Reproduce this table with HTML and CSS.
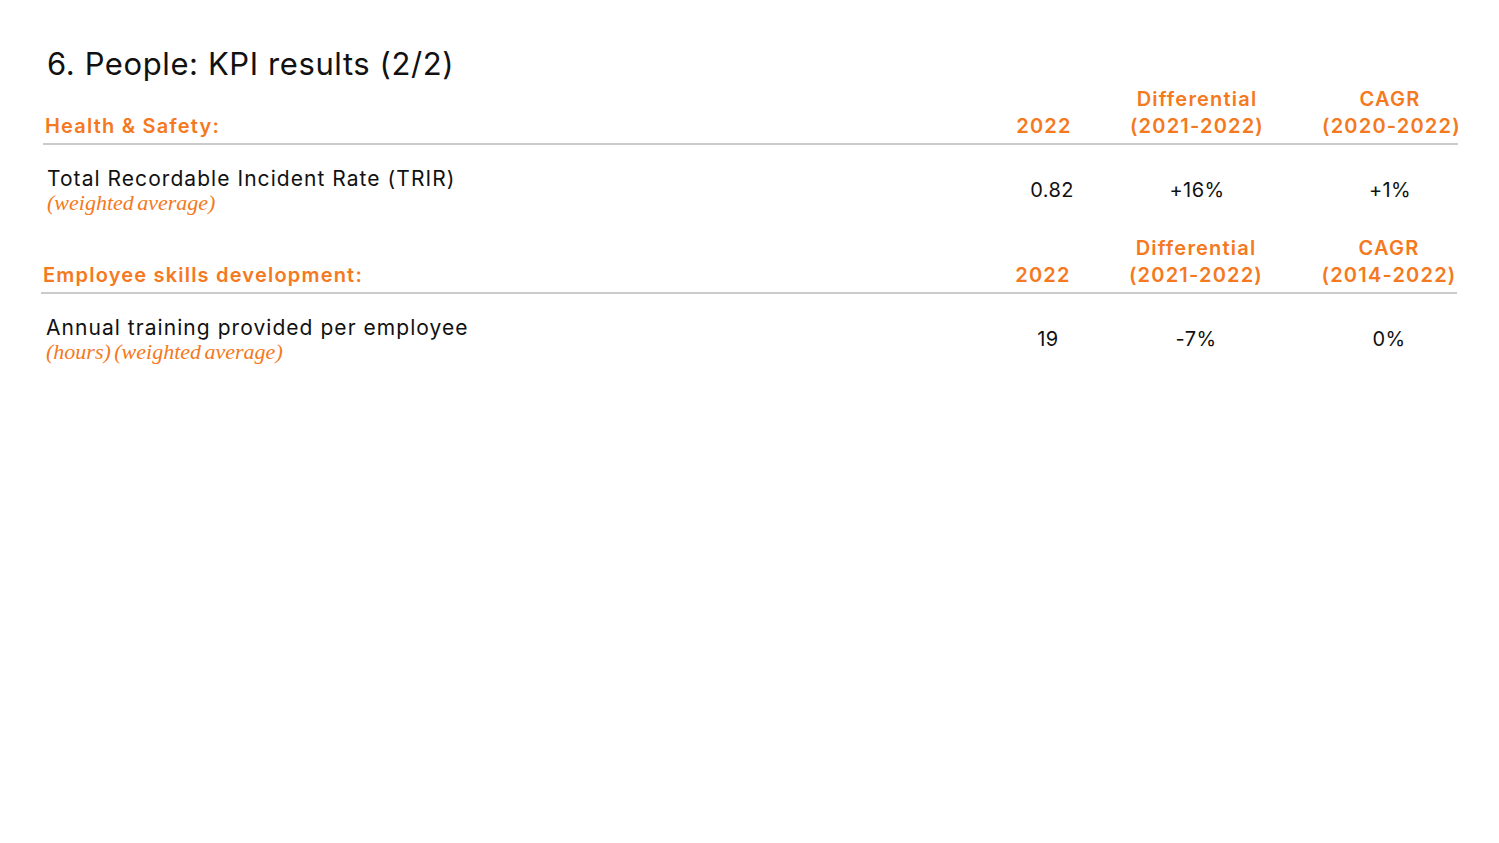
FILE: index.html
```html
<!DOCTYPE html>
<html lang="en">
<head>
<meta charset="utf-8">
<title>6. People: KPI results (2/2)</title>
<link rel="stylesheet" href="styles.css">
</head>
<body>
<div class="slide">
  <h1 class="title">6. People: KPI results (2/2)</h1>

  <section class="kpi">
    <div class="kpi-head">
      <div class="cell-label">Health &amp; Safety:</div>
      <div class="cell c1">2022</div>
      <div class="cell c2">Differential<br>(2021-2022)</div>
      <div class="cell c3">CAGR<br>(2020-2022)</div>
    </div>
    <div class="kpi-row">
      <div class="cell-label">
        <div class="metric">Total Recordable Incident Rate (TRIR)</div>
        <div class="note">(weighted average)</div>
      </div>
      <div class="val c1 v-a">0.82</div>
      <div class="val c2">+16%</div>
      <div class="val c3">+1%</div>
    </div>
  </section>

  <section class="kpi kpi-second">
    <div class="kpi-head">
      <div class="cell-label">Employee skills development:</div>
      <div class="cell c1">2022</div>
      <div class="cell c2">Differential<br>(2021-2022)</div>
      <div class="cell c3">CAGR<br>(2014-2022)</div>
    </div>
    <div class="kpi-row">
      <div class="cell-label">
        <div class="metric">Annual training provided per employee</div>
        <div class="note">(hours) (weighted average)</div>
      </div>
      <div class="val c1 v-b">19</div>
      <div class="val c2">-7%</div>
      <div class="val c3">0%</div>
    </div>
  </section>
</div>
</body>
</html>
```

FILE: styles.css
```css
html, body {
  margin: 0;
  padding: 0;
  background: #ffffff;
}

body {
  font-family: Inter, "Noto Sans", "Liberation Sans", sans-serif;
  color: #111111;
}

.slide {
  width: 1499px;
  height: 843px;
  box-sizing: border-box;
  padding: 42px 41px 0 43px;
}

.title {
  margin: 0 0 0 4px;
  font-size: 31px;
  font-weight: 400;
  line-height: 44px;
  color: #111111;
  letter-spacing: 0.6px;
}

.kpi-head,
.kpi-row {
  display: grid;
  grid-template-columns: 1fr 96px 210px 156px;
}

.kpi-head {
  align-items: end;
  border-bottom: 2px solid #cbcbcb;
  padding-bottom: 3px;
  color: #f47920;
  font-weight: 600;
  font-size: 20px;
  line-height: 27px;
  letter-spacing: 1.2px;
}

.kpi-head .cell-label {
  padding-left: 2px;
}

.cell {
  text-align: center;
  white-space: nowrap;
}

.c3 {
  padding-left: 20px;
}

.kpi-row {
  align-items: center;
  padding-top: 21px;
  padding-bottom: 21px;
}

.kpi-row .cell-label {
  padding-left: 4px;
}

.metric {
  font-size: 21px;
  line-height: 26px;
  color: #111111;
  letter-spacing: 1.05px;
}

.note {
  font-family: "Liberation Serif", "DejaVu Serif", serif;
  font-style: italic;
  font-size: 22px;
  line-height: 22px;
  color: #f47920;
  word-spacing: -2px;
}

.val {
  text-align: center;
  font-size: 20px;
  color: #111111;
  letter-spacing: 0.4px;
  white-space: nowrap;
}

.v-a {
  padding-left: 16px;
}

.v-b {
  padding-left: 10px;
}

.kpi-second {
  margin-left: -2px;
  margin-right: 1px;
}

.kpi-second .kpi-row .cell-label {
  padding-left: 5px;
}
```
